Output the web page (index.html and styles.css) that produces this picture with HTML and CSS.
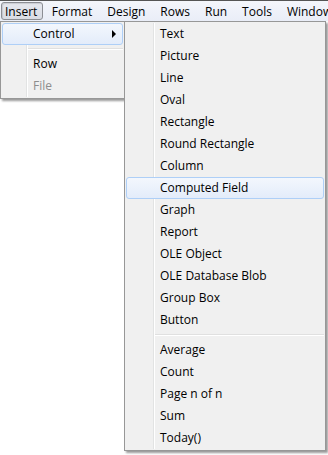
FILE: index.html
```html
<!DOCTYPE html>
<html>

<head>
    <title>Insert menu</title>
    <link rel="stylesheet" href="styles.css">
</head>

<body>
    <div class="menubar">
        <span class="bar-item pressed">Insert</span>
        <span class="bar-item">Format</span>
        <span class="bar-item">Design</span>
        <span class="bar-item">Rows</span>
        <span class="bar-item">Run</span>
        <span class="bar-item">Tools</span>
        <span class="bar-item">Window</span>
    </div>

    <div class="desk">
        <div class="menu main-menu">
            <div class="item hot">Control<span class="arrow"></span></div>
            <div class="sep"></div>
            <div class="item">Row</div>
            <div class="item disabled">File</div>
        </div>

        <div class="menu sub-menu">
            <div class="item">Text</div>
            <div class="item">Picture</div>
            <div class="item">Line</div>
            <div class="item">Oval</div>
            <div class="item">Rectangle</div>
            <div class="item">Round Rectangle</div>
            <div class="item">Column</div>
            <div class="item hot">Computed Field</div>
            <div class="item">Graph</div>
            <div class="item">Report</div>
            <div class="item">OLE Object</div>
            <div class="item">OLE Database Blob</div>
            <div class="item">Group Box</div>
            <div class="item">Button</div>
            <div class="sep"></div>
            <div class="item">Average</div>
            <div class="item">Count</div>
            <div class="item">Page n of n</div>
            <div class="item">Sum</div>
            <div class="item">Today()</div>
        </div>
    </div>
</body>
</html>
```

FILE: styles.css
```css
body {
    margin: 0;
    width: 328px;
    height: 455px;
    overflow: hidden;
    background: #ffffff;
    font-family: "Open Sans", "Liberation Sans", sans-serif;
    font-size: 12px;
    color: #000000;
}

.menubar {
    display: flex;
    height: 20px;
    overflow: hidden;
    border-top: 1px solid #555555;
    background: linear-gradient(#f4f6fb, #e9edf7);
    white-space: nowrap;
}

.bar-item {
    box-sizing: border-box;
    height: 18px;
    margin-top: 1px;
    padding: 0 6.5px;
    line-height: 17px;
    border: 1px solid transparent;
}

.bar-item.pressed {
    margin-left: 1px;
    margin-right: 1px;
    padding: 0 5px 0 3px;
    border-color: #8c8e94;
    border-radius: 3px;
    background: linear-gradient(#e6e8ee, #d9dce4);
    box-shadow: inset 1px 1px 1px rgba(0, 0, 0, 0.12);
}

.desk {
    display: flex;
    align-items: flex-start;
}

.menu {
    box-sizing: border-box;
    position: relative;
    padding: 1px 1px 1px;
    border: 1px solid #979797;
    background: #f0f0f0;
    box-shadow: 2px 2px 2px rgba(0, 0, 0, 0.4);
}

.menu:before {
    content: '';
    position: absolute;
    top: 1px;
    bottom: 1px;
    border-left: 1px solid #e2e3e3;
    border-right: 1px solid #ffffff;
}

.main-menu {
    width: 125px;
}

.main-menu:before {
    left: 25px;
}

.sub-menu {
    width: 202px;
    margin-left: -1px;
}

.sub-menu:before {
    left: 28px;
}

.item {
    position: relative;
    box-sizing: border-box;
    height: 22px;
    line-height: 20px;
    border: 1px solid transparent;
    border-radius: 3px;
    white-space: nowrap;
}

.main-menu .item {
    padding-left: 30px;
}

.sub-menu .item {
    padding-left: 33px;
}

.item.hot {
    z-index: 1;
    border-color: #aecff7;
    background: linear-gradient(#f3f7fd, #e3ecfa);
}

.item.disabled {
    color: #8d8d8d;
}

.arrow {
    position: absolute;
    right: 6px;
    top: 6px;
    border-left: 4px solid #000000;
    border-top: 4px solid transparent;
    border-bottom: 4px solid transparent;
}

.sep {
    height: 1px;
    margin: 3px 0 3px;
    border-top: 1px solid #e0e0e0;
    background: #ffffff;
}

.main-menu .sep {
    margin-left: 26px;
}

.sub-menu .sep {
    margin-left: 29px;
}
```
